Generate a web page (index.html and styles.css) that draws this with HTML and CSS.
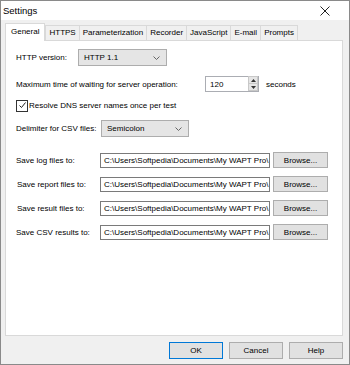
FILE: index.html
```html
<!DOCTYPE html>
<html lang="en">
<head>
  <meta charset="UTF-8">
  <title>Settings</title>
  <link rel="stylesheet" href="styles.css">
</head>
<body>
  <div class="window">
    <div class="titlebar">
      <span class="title">Settings</span>
      <svg class="close" width="10" height="10" viewBox="0 0 10 10">
        <path d="M0.5 0.5 L9.5 9.5 M9.5 0.5 L0.5 9.5" stroke="#222" stroke-width="1" fill="none"/>
      </svg>
    </div>

    <div class="client">
      <div class="tabs">
        <div class="tab active">General</div>
        <div class="tab">HTTPS</div>
        <div class="tab">Parameterization</div>
        <div class="tab">Recorder</div>
        <div class="tab">JavaScript</div>
        <div class="tab">E-mail</div>
        <div class="tab">Prompts</div>
      </div>

      <div class="panel">
        <div class="row row-version">
          <span class="lbl lbl-version">HTTP version:</span>
          <div class="select select-version">
            <span>HTTP 1.1</span>
            <svg width="7" height="4" viewBox="0 0 7 4"><path d="M0.5 0.5 L3.5 3.5 L6.5 0.5" stroke="#666" fill="none"/></svg>
          </div>
        </div>

        <div class="row row-timeout">
          <span class="lbl lbl-timeout">Maximum time of waiting for server operation:</span>
          <div class="spinner">
            <span class="spin-value">120</span>
            <div class="spin-btns">
              <div class="spin-btn"><svg width="5" height="3" viewBox="0 0 5 3"><path d="M0 3 L2.5 0 L5 3Z" fill="#333"/></svg></div>
              <div class="spin-btn"><svg width="5" height="3" viewBox="0 0 5 3"><path d="M0 0 L2.5 3 L5 0Z" fill="#333"/></svg></div>
            </div>
          </div>
          <span class="unit">seconds</span>
        </div>

        <div class="row row-check">
          <span class="checkbox">
            <svg width="9" height="9" viewBox="0 0 9 9"><path d="M1.5 4.5 L3.5 6.5 L7.5 1.5" stroke="#222" stroke-width="1" fill="none"/></svg>
          </span>
          <span>Resolve DNS server names once per test</span>
        </div>

        <div class="row row-delim">
          <span class="lbl lbl-delim">Delimiter for CSV files:</span>
          <div class="select select-delim">
            <span>Semicolon</span>
            <svg width="7" height="4" viewBox="0 0 7 4"><path d="M0.5 0.5 L3.5 3.5 L6.5 0.5" stroke="#666" fill="none"/></svg>
          </div>
        </div>

        <div class="paths">
          <span class="lbl">Save log files to:</span>
          <div class="path">C:\Users\Softpedia\Documents\My WAPT Pro\</div>
          <button class="btn">Browse...</button>

          <span class="lbl lbl-shift">Save report files to:</span>
          <div class="path">C:\Users\Softpedia\Documents\My WAPT Pro\</div>
          <button class="btn">Browse...</button>

          <span class="lbl lbl-shift">Save result files to:</span>
          <div class="path">C:\Users\Softpedia\Documents\My WAPT Pro\</div>
          <button class="btn">Browse...</button>

          <span class="lbl">Save CSV results to:</span>
          <div class="path">C:\Users\Softpedia\Documents\My WAPT Pro\</div>
          <button class="btn">Browse...</button>
        </div>
      </div>

      <div class="buttons">
        <button class="btn btn-dlg btn-default">OK</button>
        <button class="btn btn-dlg">Cancel</button>
        <button class="btn btn-dlg">Help</button>
      </div>
    </div>
  </div>
</body>
</html>
```

FILE: styles.css
```css
body {
  margin: 0;
  font-family: "Liberation Sans", Arial, sans-serif;
  font-size: 8px;
  color: #000;
}
.window {
  width: 350px;
  height: 365px;
  box-sizing: border-box;
  border: 1px solid #8a8a8a;
  display: flex;
  flex-direction: column;
  background: #f0f0f0;
}
.titlebar {
  height: 19px;
  background: #fff;
  display: flex;
  align-items: center;
  justify-content: space-between;
  padding: 0 19px 0 2px;
}
.title {
  font-size: 9.5px;
}
.client {
  flex: 1;
  padding: 3px 6px 0 4px;
  display: flex;
  flex-direction: column;
}
.tabs {
  display: flex;
  align-items: flex-end;
  height: 17px;
}
.tab {
  height: 14px;
  line-height: 14px;
  padding: 0 3px;
  border: 1px solid #d9d9d9;
  border-bottom: none;
  margin-left: -1px;
  background: #f0f0f0;
  white-space: nowrap;
}
.tab.active {
  height: 17px;
  line-height: 15px;
  margin-left: 0;
  margin-bottom: -1px;
  padding: 0 5px;
  background: #fff;
  position: relative;
  z-index: 1;
}
.tab.active + .tab {
  margin-left: 0;
}
.panel {
  height: 296px;
  box-sizing: border-box;
  border: 1px solid #d9d9d9;
  background: #fff;
  padding: 8px 0 0 10px;
}
.row {
  display: flex;
  align-items: center;
  white-space: nowrap;
}
.lbl-version { width: 62px; }
.lbl-timeout { width: 189px; }
.lbl-delim { width: 85px; }
.select {
  height: 17px;
  box-sizing: border-box;
  border: 1px solid #adadad;
  background: #e5e5e5;
  display: flex;
  align-items: center;
  justify-content: space-between;
  padding: 0 6px 0 5px;
}
.select-version { width: 89px; }
.select-delim { width: 88px; }
.row-timeout {
  margin-top: 10px;
}
.spinner {
  width: 54px;
  height: 16px;
  box-sizing: border-box;
  border: 1px solid #abadb3;
  display: flex;
  align-items: center;
  justify-content: space-between;
}
.spin-value {
  padding-left: 4px;
}
.spin-btns {
  width: 10px;
  height: 14px;
  display: flex;
  flex-direction: column;
}
.spin-btn {
  flex: 1;
  background: #e5e5e5;
  border: 1px solid #c8c8c8;
  display: flex;
  align-items: center;
  justify-content: center;
  margin-top: -1px;
}
.unit {
  margin-left: 7px;
}
.row-check {
  margin-top: 7px;
  height: 13px;
}
.checkbox {
  width: 10px;
  height: 10px;
  border: 1px solid #333;
  margin-right: 1px;
  display: flex;
  align-items: center;
  justify-content: center;
}
.row-delim {
  margin-top: 8px;
}
.paths {
  margin-top: 15px;
  display: grid;
  grid-template-columns: 81px 170px 55px;
  grid-auto-rows: 16px;
  column-gap: 3px;
  row-gap: 8px;
  align-items: center;
  white-space: nowrap;
}
.lbl-shift {
  padding-left: 1px;
}
.path {
  height: 15px;
  line-height: 13px;
  box-sizing: border-box;
  border: 1px solid #7a7a7a;
  padding-left: 3px;
  overflow: hidden;
}
.btn {
  height: 16px;
  box-sizing: border-box;
  border: 1px solid #adadad;
  background: #e1e1e1;
  font-family: inherit;
  font-size: 8px;
  color: #000;
  padding: 0;
}
.buttons {
  display: flex;
  justify-content: flex-end;
  gap: 6px;
  padding-top: 6px;
}
.btn-dlg {
  width: 54px;
  height: 17px;
}
.btn-default {
  border-color: #0078d7;
}
```
